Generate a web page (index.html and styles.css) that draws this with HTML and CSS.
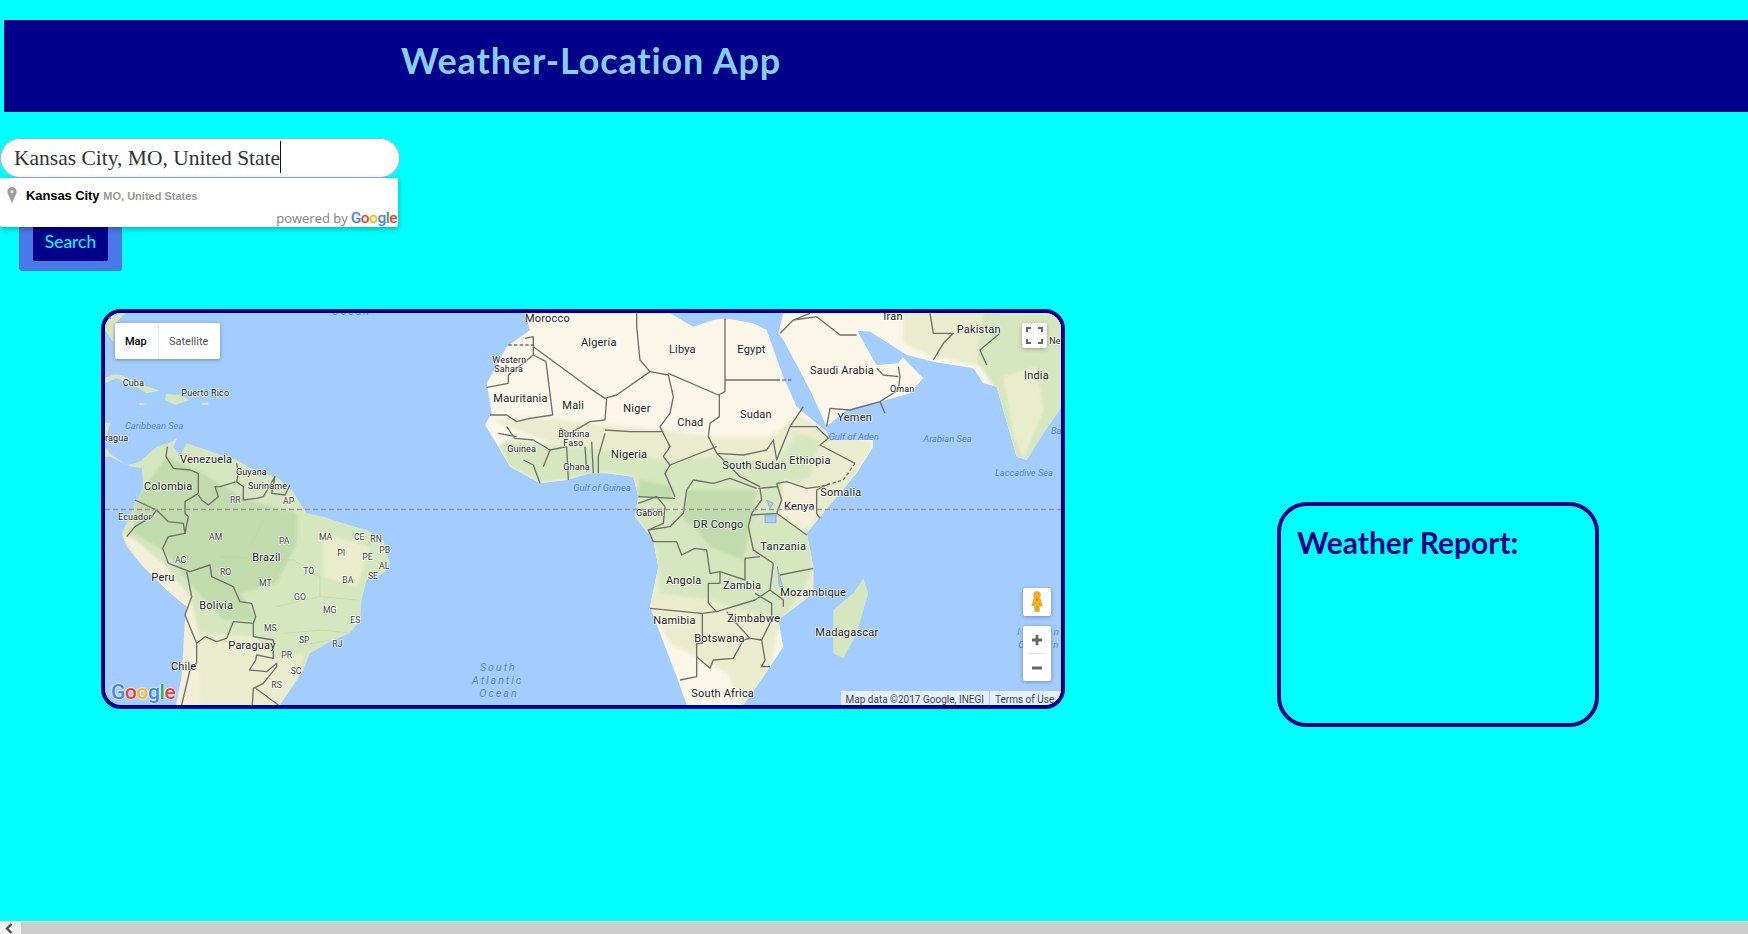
FILE: index.html
```html
<!DOCTYPE html>
<html lang="en">
<head>
<meta charset="utf-8">
<title>Weather-Location App</title>
<link rel="stylesheet" href="styles.css">
</head>
<body>
<div class="page">
  <header class="app-header"><h1 class="app-title">Weather-Location App</h1></header>

  <section class="search">
    <div class="search-input"><span class="search-text">Kansas City, MO, United State</span></div>
    <div class="pac">
      <div class="pac-item">
        <svg class="pac-pin" viewBox="0 0 10 17"><path d="M5 0C2 0 .4 2.2.4 4.6.4 8 3.6 11 5 17c1.400-6 4.600-9 4.600-12.400C9.600 2.200 8 0 5 0z" fill="#9c9c9c"/><circle cx="5" cy="4.700" r="1.600" fill="#e4e4e4"/></svg>
        <span class="pac-main">Kansas City</span><span class="pac-sub">MO, United States</span>
      </div>
      <div class="pac-foot">powered by <span class="g-word"><span class="g-b">G</span><span class="g-r">o</span><span class="g-y">o</span><span class="g-b">g</span><span class="g-g">l</span><span class="g-r">e</span></span></div>
    </div>
    <div class="search-btn-wrap"><button class="search-btn">Search</button></div>
  </section>

  <main class="content">
    <div class="map">
      <svg class="map-art" viewBox="0 0 956 392" width="956" height="392">
        <defs>
          <clipPath id="clip-sa"><path d="M155,480 L200,440 L235,430 L262,415 L250,440 L270,465 L290,430 L350,450 L440,480 L500,515 L560,530 L610,575 L630,610 L650,640 L700,650 L760,670 L830,690 L880,720 L900,790 L880,820 L830,840 L815,900 L810,960 L780,1000 L730,1020 L660,1060 L640,1110 L600,1170 L570,1215 L258,1215 L275,1130 L285,960 L290,920 L230,870 L160,800 L110,740 L95,700 L115,660 L135,610 L160,560 L155,500Z"/></clipPath>
          <clipPath id="clip-af"><path d="M-135,40 L300,40 L370,80 L430,60 L465,55 L550,70 L590,90 L640,230 L680,320 L770,395 L780,420 L910,420 L910,440 L860,520 L750,650 L710,700 L730,800 L730,880 L625,960 L640,1040 L580,1130 L520,1215 L350,1215 L320,1130 L270,1000 L240,920 L265,800 L250,720 L195,650 L205,590 L190,530 L110,520 L60,520 L-10,540 L-90,550 L-180,500 L-215,440 L-255,375 L-235,340 L-250,250 L-190,140 L-120,90Z"/></clipPath>
          <clipPath id="clip-as"><path d="M625,100 L640,40 H1475 V320 L1420,400 L1370,480 L1340,470 L1280,260 L1240,250 L1210,205 L1090,185 L1010,165 L900,95 L862,92 L905,170 L920,195 L985,190 L998,172 L1060,235 L1020,280 L930,305 L830,330 L770,380 L720,270 L640,120Z"/></clipPath>
        </defs>

        <g transform="translate(-15,-13) scale(.33333)">
          <path class="land-green" d="M45,40 L105,40 L75,70 L70,130 L85,150 L65,120 L45,90Z"/>
          <path class="land-green" d="M45,235 Q75,215 105,230 L160,255 L210,272 L170,280 L130,255 L80,235 L45,250Z"/>
          <path class="land-green" d="M228,282 L270,285 L300,300 L255,315 L225,300Z"/>
          <path class="land-green" d="M335,308 L355,308 L355,315 L335,315Z"/>
          <path class="land-green" d="M145,308 L175,312 L150,316Z"/>
          <path class="land-green" d="M45,368 L62,368 L50,405 L45,410Z"/>
          <path class="land-green" d="M45,440 L65,465 L110,495 L135,490 L160,480 L155,505 L125,500 L90,485 L60,470 L45,470Z"/>
          <g clip-path="url(#clip-sa)">
            <rect class="land-green" x="40" y="400" width="900" height="830"/>
            <path class="land-dark soft" d="M135,600 L230,470 L320,510 L470,600 L620,640 L620,730 L560,850 L450,880 L500,960 L400,960 L300,850 L220,750 L130,700Z"/>
            <path class="land-pale soft" d="M90,700 L135,720 L220,790 L300,890 L330,1010 L340,1220 L250,1220 L280,930 L160,810Z"/>
            <path class="land-mid soft" d="M330,1000 L500,1010 L560,1080 L640,1060 L620,1220 L330,1220Z"/>
            <path class="land-mid soft" d="M700,700 L840,740 L800,860 L700,830Z"/>
          </g>
          <path class="border" d="M232,440 L228,470 L250,505 L300,510 L325,520 L325,580 L285,605 L285,640 L295,650 L285,700"/>
          <path class="border" d="M440,490 L445,520 L440,545 L390,560 L375,560 L385,590 L355,615 L335,600 L325,585"/>
          <path class="border" d="M440,545 L460,560 L460,600 L500,595 L520,590 L555,530 L545,580 L585,585 L600,555"/>
          <path class="border" d="M135,600 L200,630 L235,665 L280,670 L285,700 L235,710 L218,745 L235,790 L300,815 L360,795 L365,830 L430,860 L450,905 L485,910 L497,950 L490,970 L430,965 L410,1015 L380,1025 L345,1010 L320,1030 L285,945 L305,890 L290,815"/>
          <path class="border" d="M110,710 L135,680 L185,650 L200,630"/>
          <path class="border" d="M490,970 L490,1010 L550,1020 L550,1075 L500,1065 L497,1080 L478,1110 L530,1115 L560,1090 L560,1100 L520,1150 L490,1165 L487,1215"/>
          <path class="border" d="M497,1165 L565,1215"/>
          <path class="border" d="M320,1030 L320,1090 L300,1110 L275,1215"/>
          <path class="border-state" d="M480,740 L520,660 M390,770 L610,780 M610,780 L690,830 L690,890 M560,920 L690,890 L800,900 M580,1000 L700,990 L780,1000 M620,1040 L720,1020"/>
          <text class="lbl-sea-sp" x="725" y="45">Ocean</text>
          <text class="lbl-s" x="45" y="58">A</text>
          <text class="lbl-s" x="98" y="258">Cuba</text>
          <text class="lbl-s" x="274" y="288">Puerto Rico</text>
          <text class="lbl-sea" x="105" y="388">Caribbean Sea</text>
          <text class="lbl-s" x="45" y="424">ragua</text>
          <text class="lbl" x="270" y="490">Venezuela</text>
          <text class="lbl-s" x="438" y="525">Guyana</text>
          <text class="lbl-s" x="474" y="567">Suriname</text>
          <text class="lbl" x="162" y="571">Colombia</text>
          <text class="lbl-st" x="420" y="608">RR</text>
          <text class="lbl-st" x="579" y="611">AP</text>
          <text class="lbl-s" x="84" y="660">Ecuador</text>
          <text class="lbl-st" x="357" y="719">AM</text>
          <text class="lbl-st" x="567" y="731">PA</text>
          <text class="lbl-st" x="687" y="719">MA</text>
          <text class="lbl-st" x="792" y="719">CE</text>
          <text class="lbl-st" x="841" y="725">RN</text>
          <text class="lbl-st" x="742" y="767">PI</text>
          <text class="lbl-st" x="868" y="758">PB</text>
          <text class="lbl-st" x="817" y="779">PE</text>
          <text class="lbl-st" x="867" y="806">AL</text>
          <text class="lbl" x="487" y="784">Brazil</text>
          <text class="lbl-st" x="255" y="788">AC</text>
          <text class="lbl-st" x="390" y="824">RO</text>
          <text class="lbl-st" x="640" y="821">TO</text>
          <text class="lbl-st" x="834" y="836">SE</text>
          <text class="lbl-st" x="757" y="848">BA</text>
          <text class="lbl-st" x="507" y="857">MT</text>
          <text class="lbl" x="184" y="844">Peru</text>
          <text class="lbl-st" x="612" y="899">GO</text>
          <text class="lbl" x="328" y="928">Bolivia</text>
          <text class="lbl-st" x="699" y="938">MG</text>
          <text class="lbl-st" x="781" y="968">ES</text>
          <text class="lbl-st" x="522" y="992">MS</text>
          <text class="lbl-st" x="627" y="1028">SP</text>
          <text class="lbl-st" x="727" y="1040">RJ</text>
          <text class="lbl" x="415" y="1046">Paraguay</text>
          <text class="lbl-st" x="574" y="1073">PR</text>
          <text class="lbl" x="243" y="1111">Chile</text>
          <text class="lbl-st" x="602" y="1121">SC</text>
          <text class="lbl-st" x="544" y="1163">RS</text>
          <text class="lbl-sea-sp" x="1170" y="1112">South</text>
          <text class="lbl-sea-sp" x="1146" y="1151">Atlantic</text>
          <text class="lbl-sea-sp" x="1168" y="1191">Ocean</text>
        </g>

        <g transform="translate(465,-13) scale(.33333)">
          <g clip-path="url(#clip-as)">
            <rect class="land" x="600" y="30" width="900" height="480"/>
            <path class="land-mid soft" d="M1000,30 H1300 L1240,200 L1090,170 L1000,130Z"/>
            <path class="land-green soft" d="M1240,40 H1480 V500 H1340 L1270,260 L1220,180Z"/>
            <path class="land-mid soft" d="M1300,230 L1400,200 L1420,330 L1360,480 L1330,400Z"/>
          </g>
          <path class="land-green" d="M880,835 L895,880 L860,1000 L820,1075 L790,1060 L790,930 L850,880Z"/>
          <g clip-path="url(#clip-af)">
            <rect class="land" x="-300" y="30" width="1300" height="1200"/>
            <path class="land-mid soft" d="M-230,360 L-100,350 L100,375 L280,390 L420,410 L600,410 L680,350 L770,380 L910,430 L860,530 L740,700 L730,890 L620,1000 L600,1120 L520,1220 L470,1120 L300,1030 L240,920 L190,530Z"/>
            <path class="land-green soft" d="M-215,440 L-190,420 L100,450 L280,480 L440,470 L620,490 L680,400 L750,420 L720,530 L650,560 L720,700 L730,810 L640,960 L420,900 L270,880 L265,800 L250,720 L195,650 L205,590 L190,530 L110,520 L-90,550 L-180,500Z"/>
            <path class="land-dark soft" d="M210,540 L310,560 L300,600 L200,590Z M350,570 L560,570 L540,680 L520,780 L420,740 L380,690 L340,660Z"/>
            <path class="land-pale soft" d="M640,540 L730,560 L740,650 L700,700 L630,640Z"/>
          </g>
          <path class="border" d="M-135,115 L-110,110 L-110,165 L-185,225 L-185,250 L-250,262"/>
          <path class="border dash" d="M-185,135 L-110,135"/>
          <path class="border" d="M-110,140 L60,265 L105,295 L140,285 L240,215 L295,225 L310,290 L300,340 L270,380 L290,420 L300,440 L280,470 L300,495 L285,520 L315,590"/>
          <path class="border" d="M-72,185 L-52,345 L-120,355 L-160,365 L-190,345 L-240,345"/>
          <path class="border" d="M-72,185 L-110,165"/>
          <path class="border" d="M200,40 L200,80 L210,180 L240,215"/>
          <path class="border" d="M295,220 L445,285 L465,275 L465,55"/>
          <path class="border" d="M465,240 L620,240"/>
          <path class="border dash" d="M620,240 L670,240"/>
          <path class="border" d="M448,285 L448,350 L420,370 L415,410 L440,460 L510,530 L570,560"/>
          <path class="border" d="M110,295 L105,360 L60,365 L0,400 L-30,385"/>
          <path class="border" d="M105,400 L85,470 L85,520 M105,390 L180,395 L280,395"/>
          <path class="border" d="M300,495 L440,440 M440,460 L520,465 L590,450 L610,420 L620,480 L660,380 L700,320"/>
          <path class="border" d="M660,380 L740,380 L775,415 L750,435 L855,490"/>
          <path class="border dash" d="M855,490 L820,540 L750,560"/>
          <path class="border" d="M750,560 L710,565 L650,545 L620,550 M780,550 L740,570 L740,640 L750,655"/>
          <path class="border" d="M620,550 L635,600 L620,640 L710,705 M565,565 L625,560 M545,645 L620,640"/>
          <path class="border" d="M570,565 L575,600 L545,640 L535,680 L550,750 L610,790"/>
          <path class="border" d="M350,570 L370,540 L430,550 L480,535 L560,565"/>
          <path class="border" d="M350,570 L340,640 L300,680 L235,690 L250,725 L320,725 L335,765 L375,745 L410,750 L420,820 L450,815 L525,840 L525,775 L570,770"/>
          <path class="border" d="M415,850 L450,850 L450,815 M415,850 L415,910 L440,935 L555,900 L600,870 L610,790"/>
          <path class="border" d="M240,925 L395,940 L440,935 M397,940 L397,1030 L380,1030 L380,1130 L330,1140"/>
          <path class="border" d="M380,1070 L420,1105 L430,1080 L490,1075 L520,1020 L540,1015 L490,960 L470,935"/>
          <path class="border" d="M540,1015 L575,1020 L605,960 L605,910 L555,880 M575,1020 L585,1080 L575,1100 L600,1100"/>
          <path class="border" d="M630,825 L730,805 M600,870 L640,900 L640,920"/>
          <path class="border" d="M205,590 L315,595 M205,610 L260,590 L285,620 L280,670 L235,690"/>
          <path class="border" d="M-215,400 L-160,410 M-190,380 L-165,415 L-110,420 L-60,450 L-80,500 M-140,480 L-110,495 L-90,550 M-10,440 L-5,540 M45,440 L50,515 M65,425 L70,520 M-60,450 L-10,440"/>
          <path class="border" d="M720,40 L670,60 L630,100 M670,60 L740,50 L810,105 L860,105"/>
          <path class="border" d="M1080,40 L1090,100 L1150,100 L1120,130 L1090,180 M1290,100 L1230,150 L1250,195"/>
          <path class="border" d="M770,380 L780,325 L840,330 L930,305 L985,270 L990,230 L985,200 M930,305 L945,340 M920,205 L940,225 L985,230"/>
          <path class="lake" d="M585,645 H618 V668 H585Z M590,600 L610,610 L600,625Z M622,800 L638,860 L628,860Z"/>
          <text class="lbl-sea" x="1342" y="1005" textLength="124">Indian</text>
          <text class="lbl-sea" x="1345" y="1045" textLength="120">Ocean</text>

          <text class="lbl" x="-135" y="65">Morocco</text>
          <text class="lbl-s" x="-233" y="190">Western</text>
          <text class="lbl-s" x="-227" y="216">Sahara</text>
          <text class="lbl" x="-230" y="306">Mauritania</text>
          <text class="lbl" x="-23" y="328">Mali</text>
          <text class="lbl-s" x="-35" y="410">Burkina</text>
          <text class="lbl-s" x="-20" y="438">Faso</text>
          <text class="lbl-s" x="-188" y="456">Guinea</text>
          <text class="lbl-s" x="-20" y="509">Ghana</text>
          <text class="lbl" x="33" y="137">Algeria</text>
          <text class="lbl" x="297" y="158">Libya</text>
          <text class="lbl" x="502" y="158">Egypt</text>
          <text class="lbl" x="940" y="59">Iran</text>
          <text class="lbl" x="1160" y="100">Pakistan</text>
          <text class="lbl" x="720" y="223">Saudi Arabia</text>
          <text class="lbl" x="1362" y="236">India</text>
          <text class="lbl-s" x="960" y="276">Oman</text>
          <text class="lbl" x="160" y="335">Niger</text>
          <text class="lbl" x="322" y="379">Chad</text>
          <text class="lbl" x="510" y="355">Sudan</text>
          <text class="lbl" x="802" y="364">Yemen</text>
          <text class="lbl" x="123" y="473">Nigeria</text>
          <text class="lbl-sea" x="776" y="420">Gulf of Aden</text>
          <text class="lbl-sea" x="1060" y="426">Arabian Sea</text>
          <text class="lbl" x="658" y="491">Ethiopia</text>
          <text class="lbl" x="457" y="508">South Sudan</text>
          <text class="lbl-sea" x="1275" y="528">Laccadive Sea</text>
          <text class="lbl-sea" x="10" y="573">Gulf of Guinea</text>
          <text class="lbl" x="751" y="589">Somalia</text>
          <text class="lbl" x="642" y="629">Kenya</text>
          <text class="lbl-s" x="198" y="648">Gabon</text>
          <text class="lbl" x="370" y="685">DR Congo</text>
          <text class="lbl" x="571" y="749">Tanzania</text>
          <text class="lbl" x="288" y="851">Angola</text>
          <text class="lbl" x="459" y="868">Zambia</text>
          <text class="lbl" x="631" y="889">Mozambique</text>
          <text class="lbl" x="250" y="973">Namibia</text>
          <text class="lbl" x="472" y="967">Zimbabwe</text>
          <text class="lbl" x="736" y="1007">Madagascar</text>
          <text class="lbl" x="373" y="1027">Botswana</text>
          <text class="lbl" x="364" y="1192">South Africa</text>
          <text class="lbl-s" x="1438" y="132">Ne</text>
          <text class="lbl-sea" x="1443" y="402">Ba</text>
        </g>

        <path class="equator" d="M0,196.500 H956"/>
      </svg>

      <div class="map-type">
        <span class="map-type-btn is-active">Map</span>
        <span class="map-type-btn">Satellite</span>
      </div>
      <div class="map-full">
        <svg viewBox="0 0 25 25" width="25" height="25"><path d="M5 9V5h4M16 5h4v4M20 16v4h-4M9 20H5v-4" fill="none" stroke="#666" stroke-width="2"/></svg>
      </div>
      <div class="map-peg">
        <svg viewBox="0 0 28 28" width="28" height="28"><circle cx="14" cy="7" r="3.400" fill="#f5b21d" stroke="#c98a10" stroke-width=".5"/><path d="M11 10.500h6l2.300 7-1.800.6-1-3.100-.3 8.500h-1.900l-.3-5.500-.3 5.500h-1.900l-.3-8.500-1 3.100-1.800-.6z" fill="#f5b21d" stroke="#c98a10" stroke-width=".5"/><path d="M13 11h2l-1 3z" fill="#e8663c"/></svg>
      </div>
      <div class="map-zoom">
        <span class="map-zoom-btn">
          <svg viewBox="0 0 12 12" width="12" height="12"><path d="M6 1v10M1 6h10" stroke="#666" stroke-width="2.800"/></svg>
        </span>
        <span class="map-zoom-sep"></span>
        <span class="map-zoom-btn">
          <svg viewBox="0 0 12 12" width="12" height="12"><path d="M1 6h10" stroke="#666" stroke-width="2.800"/></svg>
        </span>
      </div>
      <div class="map-logo"><span class="g-b">G</span><span class="g-r">o</span><span class="g-y">o</span><span class="g-b">g</span><span class="g-g">l</span><span class="g-r">e</span></div>
      <div class="map-attr"><span class="map-attr-item">Map data ©2017 Google, INEGI</span><span class="map-attr-item">Terms of Use</span></div>
    </div>

    <aside class="report"><h2 class="report-title">Weather Report:</h2></aside>
  </main>
</div>

<div class="hscroll">
  <span class="hscroll-arrow">
    <svg viewBox="0 0 21 12" width="21" height="12"><path d="M11.500 2 L7 6.500 L11.500 11" fill="none" stroke="#505050" stroke-width="2.400"/></svg>
  </span>
</div>
</body>
</html>
```

FILE: styles.css
```css
* { box-sizing: border-box; }
html, body { margin: 0; height: 934px; overflow: hidden; }
body {
  display: flex;
  flex-direction: column;
  background: #00ffff;
  font-family: "Lato", "Liberation Sans", sans-serif;
}
.page { flex: 1; min-height: 0; overflow: hidden; padding-top: 20px; }

.app-header {
  margin-left: 4px;
  height: 92px;
  padding: 19px 0 0 397px;
  background: #00008b;
}
.app-title {
  margin: 0;
  color: #87ceeb;
  font-size: 36px;
  line-height: 42px;
  font-weight: 700;
  letter-spacing: .85px;
  white-space: nowrap;
}

.search { position: relative; margin-top: 26px; }
.search-input {
  width: 400px;
  height: 40px;
  padding-left: 13px;
  background: #fff;
  border: 1px solid #8fb2ee;
  border-radius: 20px;
  color: #333;
  font-family: "Liberation Serif", serif;
  font-size: 21.5px;
  line-height: 36px;
}
.search-text { display: inline-block; height: 32px; line-height: 34px; border-right: 1px solid #111; vertical-align: top; margin-top: 2px; }

.pac {
  position: absolute;
  top: 40px;
  left: 0;
  width: 398px;
  height: 49px;
  background: #fff;
  box-shadow: 0 2px 6px rgba(0, 0, 0, .3);
  border-radius: 0 0 2px 2px;
  font-family: "Liberation Sans", sans-serif;
}
.pac-item { display: flex; align-items: baseline; height: 29px; padding: 10px 0 0 7px; }
.pac-pin { width: 10px; height: 17px; flex: none; align-self: flex-start; margin-top: -1px; }
.pac-main { margin-left: 9px; color: #000; font-size: 13px; font-weight: 700; letter-spacing: -.1px; }
.pac-sub { margin-left: 4px; color: #999; font-size: 11px; font-weight: 700; }
.pac-foot {
  display: flex;
  justify-content: flex-end;
  align-items: baseline;
  gap: 3px;
  padding: 2px 1px 0 0;
  color: #808080;
  font-family: "Open Sans", sans-serif;
  font-size: 13px;
  line-height: 18px;
}
.g-word { font-family: "Roboto", sans-serif; font-size: 15.500px; font-weight: 500; letter-spacing: -.5px; }
.g-b { color: #4285f4; }
.g-r { color: #ea4335; }
.g-y { color: #fbbc05; }
.g-g { color: #34a853; }

.search-btn-wrap {
  width: 103px;
  height: 60px;
  margin: 33px 0 0 19px;
  padding: 10px 14px;
  background: #4a7ae8;
  border-radius: 3px;
}
.search-btn {
  display: block;
  width: 75px;
  height: 40px;
  padding: 0;
  border: 0;
  border-radius: 2px;
  background: #00008b;
  color: #00ffff;
  font: 400 17.500px "Lato", sans-serif;
}

.content { display: flex; align-items: flex-start; margin-top: 38px; padding-left: 101px; }
.map {
  position: relative;
  flex: none;
  width: 964px;
  height: 400px;
  border: 4px solid #00008b;
  border-radius: 20px;
  overflow: hidden;
  background: #a3ccff;
  font-family: "Roboto", sans-serif;
}
.map-art { display: block; }

.land { fill: #faf6e8; }
.land-green { fill: #d6e7bf; }
.land-dark { fill: #c0dbac; }
.land-mid { fill: #e9edcd; }
.land-pale { fill: #f4efd9; }
.soft { filter: blur(5px); }
.lake { fill: #a3ccff; stroke: #7a87a6; stroke-width: 1.500; }
.border { fill: none; stroke: #6f6f6a; stroke-width: 4; stroke-linejoin: round; }
.border.dash { stroke-dasharray: 10 7; }
.border-state { fill: none; stroke: #c5d2ae; stroke-width: 2; }
.equator { fill: none; stroke: #a6919f; stroke-width: 1.500; stroke-dasharray: 5 3; }

.lbl, .lbl-s, .lbl-st {
  fill: #222;
  font-family: "Roboto", sans-serif;
  paint-order: stroke;
  stroke: rgba(255, 255, 255, .75);
  stroke-width: 5px;
  stroke-linejoin: round;
}
.lbl { font-size: 33px; letter-spacing: .6px; }
.lbl-s { font-size: 27px; letter-spacing: .4px; }
.lbl-st { font-size: 26px; fill: #444; }
.lbl-sea, .lbl-sea-sp {
  fill: #5a86cc;
  font-family: "Roboto", sans-serif;
  font-style: italic;
  font-size: 28px;
}
.lbl-sea-sp { font-size: 32px; letter-spacing: 6px; }

.map-type {
  position: absolute;
  top: 10px;
  left: 10px;
  display: flex;
  width: 105px;
  height: 36px;
  background: #fff;
  border-radius: 2px;
  box-shadow: 0 1px 4px rgba(0, 0, 0, .3);
  font-size: 11px;
  line-height: 38px;
  color: #565656;
}
.map-type-btn { padding: 0 11px 0 10px; }
.map-type-btn.is-active { width: 44px; color: #000; font-weight: 500; border-right: 1px solid #e6e6e6; }

.map-full, .map-peg, .map-zoom {
  position: absolute;
  background: #fff;
  border-radius: 2px;
  box-shadow: 0 1px 4px rgba(0, 0, 0, .3);
}
.map-full { top: 10px; left: 917px; width: 25px; height: 25px; }
.map-peg { top: 275px; left: 918px; width: 28px; height: 28px; }
.map-full svg, .map-peg svg { display: block; }
.map-zoom {
  top: 313px;
  left: 918px;
  width: 28px;
  height: 55px;
  display: flex;
  flex-direction: column;
  align-items: center;
}
.map-zoom-btn { flex: 1; display: flex; align-items: center; justify-content: center; }
.map-zoom-sep { flex: none; width: 18px; height: 1px; background: #e6e6e6; }

.map-logo {
  position: absolute;
  left: 6px;
  bottom: 0;
  font-family: "Roboto", sans-serif;
  font-size: 21px;
  line-height: 26px;
  font-weight: 500;
  letter-spacing: -.4px;
  text-shadow: 0 0 2px #fff, 0 0 2px #fff;
}
.map-attr {
  position: absolute;
  right: 0;
  bottom: 0;
  display: flex;
  gap: 1px;
  height: 14px;
  font-size: 10px;
  line-height: 18px;
  color: #444;
  white-space: nowrap;
  overflow: hidden;
}
.map-attr-item { padding: 0 5px; background: rgba(255, 255, 255, .7); }
.map-attr-item:last-child { width: 71px; padding-right: 0; overflow: hidden; }

.report {
  flex: none;
  width: 322px;
  height: 225px;
  margin: 193px 0 0 212px;
  padding: 18px 16px;
  border: 4px solid #00008b;
  border-radius: 30px;
}
.report-title {
  margin: 0;
  color: #00008b;
  font-size: 30px;
  line-height: 36px;
  font-weight: 700;
  white-space: nowrap;
}

.hscroll { flex: none; height: 12px; margin-top: 1px; background: #cdcdcd; display: flex; box-shadow: 0 -1px 0 #fff; }
.hscroll-arrow { width: 21px; height: 12px; background: #f1f1f1; }
.hscroll-arrow svg { display: block; }
```
